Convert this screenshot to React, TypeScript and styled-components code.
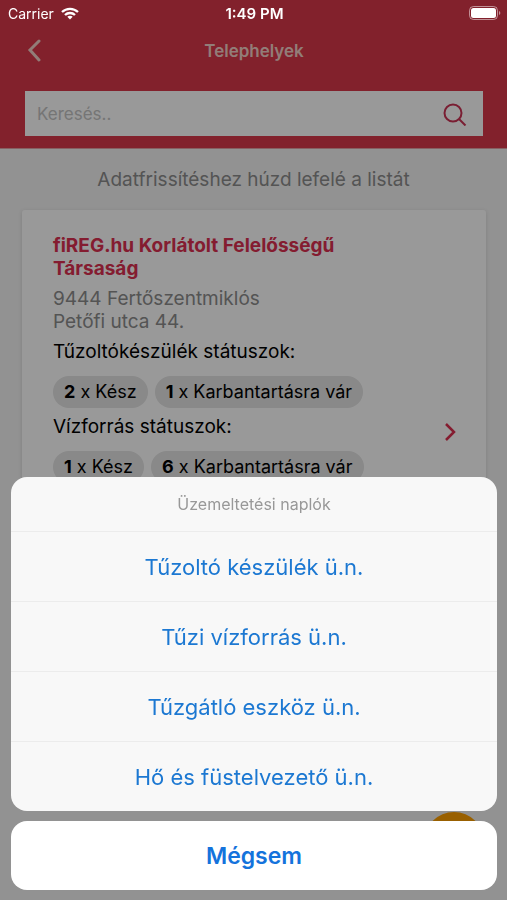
import React from 'react';
import styled, { createGlobalStyle } from 'styled-components';

const GlobalStyle = createGlobalStyle`
  *, *::before, *::after { box-sizing: border-box; }
  body {
    margin: 0;
    background: #f3f3f3;
    color: #000;
    font-family: Inter, "Liberation Sans", sans-serif;
    font-size: 19px;
  }
  h1, h2, h3, p, ul, address { margin: 0; padding: 0; font-style: normal; }
  button, input { font: inherit; border: 0; padding: 0; background: none; }
  button { cursor: pointer; }
`;

const Page = styled.div`
  height: 100vh;
  overflow: hidden;
`;

const StatusBar = styled.div`
  position: fixed;
  inset: 0 0 auto;
  z-index: 3;
  display: grid;
  grid-template-columns: 1fr auto 1fr;
  align-items: center;
  height: 26px;
  padding: 0 6px 0 8px;
  color: #fff;
  font-size: 14px;
`;

const Carrier = styled.span`
  display: flex;
  align-items: center;
  gap: 7px;
`;

const Clock = styled.span`
  font-size: 15px;
  font-weight: 600;
`;

const Battery = styled.svg`
  justify-self: end;
`;

const Header = styled.header`
  padding: 26px 24px 12px 25px;
  background: #d9374a;
  border-bottom: 1px solid #e2a0a4;
`;

const NavBar = styled.nav`
  display: grid;
  grid-template-columns: 24px 1fr 24px;
  align-items: center;
  height: 50px;
  margin-bottom: 15px;
  color: #f3d0c8;
`;

const BackButton = styled.button`
  display: flex;
  color: inherit;
`;

const NavTitle = styled.h1`
  font-size: 17px;
  font-weight: 600;
  line-height: 24px;
  text-align: center;
`;

const SearchBox = styled.form`
  display: flex;
  align-items: center;
  height: 45px;
  padding: 0 16px 0 12px;
  background: #fff;
`;

const SearchInput = styled.input`
  flex: 1;
  min-width: 0;
  outline: none;
  font-size: 17px;
  &::placeholder { color: #c4c4c4; opacity: 1; }
`;

const SearchButton = styled.button`
  display: flex;
  color: #cc3355;
`;

const Hint = styled.p`
  padding: 18px 0;
  color: #8c8c8c;
  line-height: 25px;
  text-align: center;
`;

const Card = styled.article`
  display: flex;
  align-items: center;
  min-height: 444px;
  margin: 0 21px 0 22px;
  padding: 24px 28px 24px 31px;
  border-radius: 3px;
  background: #fff;
  box-shadow: 0 1px 4px rgba(0, 0, 0, 0.12);
`;

const CardBody = styled.div`
  flex: 1;
  align-self: flex-start;
  min-width: 0;
`;

const Company = styled.h2`
  max-width: 320px;
  margin-bottom: 7px;
  color: #dc3050;
  font-size: 19px;
  font-weight: 700;
  line-height: 23px;
`;

const Address = styled.address`
  color: #8c8c8c;
  line-height: 23px;
`;

const StatusLabel = styled.h3`
  padding: 6px 0 12px;
  font-size: 19px;
  font-weight: 400;
  line-height: 25px;
`;

const Chips = styled.ul`
  display: flex;
  gap: 7px;
  list-style: none;
`;

const Chip = styled.li`
  padding: 0 11px;
  border-radius: 16px;
  background: #e4e4e4;
  font-size: 18px;
  line-height: 32px;
  white-space: nowrap;
`;

const CardLink = styled.a`
  display: flex;
  color: #dc3050;
`;

const AddButton = styled.button`
  position: fixed;
  right: 23px;
  bottom: 28px;
  width: 60px;
  height: 60px;
  border-radius: 50%;
  background: #ffa000;
`;

const Backdrop = styled.div`
  position: fixed;
  inset: 0;
  z-index: 2;
  display: flex;
  flex-direction: column;
  justify-content: flex-end;
  gap: 10px;
  padding: 10px 10px 10px 11px;
  background: rgba(0, 0, 0, 0.4);
`;

const Sheet = styled.section`
  overflow: hidden;
  border-radius: 16px;
  background: #f8f8f8;
`;

const SheetTitle = styled.h2`
  color: #989898;
  font-size: 16px;
  font-weight: 400;
  line-height: 54px;
  text-align: center;
`;

const SheetAction = styled.button`
  display: block;
  width: 100%;
  height: 70px;
  border-top: 1px solid #ececec;
  color: #1c78d2;
  font-size: 22px;
`;

const CancelButton = styled.button`
  flex: none;
  height: 69px;
  border-radius: 16px;
  background: #fff;
  color: #1473dc;
  font-size: 23px;
  font-weight: 600;
`;

const statuses = [
  { label: 'Tűzoltókészülék státuszok:', items: [[2, 'Kész'], [1, 'Karbantartásra vár']] },
  { label: 'Vízforrás státuszok:', items: [[1, 'Kész'], [6, 'Karbantartásra vár']] },
];

const actions = [
  'Tűzoltó készülék ü.n.',
  'Tűzi vízforrás ü.n.',
  'Tűzgátló eszköz ü.n.',
  'Hő és füstelvezető ü.n.',
];

export default function App() {
  return (
    <Page>
      <GlobalStyle />
      <StatusBar>
        <Carrier>
          Carrier
          <svg width="18" height="13" viewBox="0 0 18 13" fill="none" stroke="#fff" strokeWidth="2.3" aria-hidden="true">
            <path d="M1 5C5.5 .7 12.5 .7 17 5" />
            <path d="M4 8C6.8 5.3 11.2 5.3 14 8" />
            <path d="M9 12.5 6.3 9.8C7.8 8.4 10.2 8.4 11.7 9.8Z" fill="#fff" stroke="none" />
          </svg>
        </Carrier>
        <Clock>1:49 PM</Clock>
        <Battery width="32" height="14" viewBox="0 0 32 14" aria-hidden="true">
          <rect x=".5" y=".5" width="28" height="13" rx="4" fill="none" stroke="#fff" strokeOpacity=".5" />
          <rect x="2" y="2" width="25" height="10" rx="2.5" fill="#fff" />
          <path d="M30 5c1.8.6 1.8 3.4 0 4Z" fill="#fff" fillOpacity=".5" />
        </Battery>
      </StatusBar>

      <Header>
        <NavBar>
          <BackButton aria-label="Vissza">
            <svg width="20" height="24" viewBox="0 0 20 24" fill="none" stroke="currentColor" strokeWidth="3" strokeLinecap="round">
              <path d="M14 2 5 11l9 10" />
            </svg>
          </BackButton>
          <NavTitle>Telephelyek</NavTitle>
        </NavBar>
        <SearchBox role="search">
          <SearchInput type="text" placeholder="Keresés.." aria-label="Keresés" />
          <SearchButton type="button" aria-label="Keresés">
            <svg width="24" height="24" viewBox="0 0 24 24" fill="none" stroke="currentColor" strokeWidth="2">
              <circle cx="10" cy="11" r="8.5" />
              <path d="m16 17 6.5 6.5" />
            </svg>
          </SearchButton>
        </SearchBox>
      </Header>

      <main>
        <Hint>Adatfrissítéshez húzd lefelé a listát</Hint>
        <Card>
          <CardBody>
            <Company>fiREG.hu Korlátolt Felelősségű Társaság</Company>
            <Address>9444 Fertőszentmiklós<br />Petőfi utca 44.</Address>
            {statuses.map((group) => (
              <section key={group.label}>
                <StatusLabel>{group.label}</StatusLabel>
                <Chips>
                  {group.items.map(([count, name]) => (
                    <Chip key={name}><b>{count}</b> x {name}</Chip>
                  ))}
                </Chips>
              </section>
            ))}
          </CardBody>
          <CardLink href="#" aria-label="Megnyitás">
            <svg width="16" height="20" viewBox="0 0 16 20" fill="none" stroke="currentColor" strokeWidth="2.5">
              <path d="m4 2 8 8-8 8" />
            </svg>
          </CardLink>
        </Card>
      </main>
      <AddButton aria-label="Hozzáadás" />

      <Backdrop>
        <Sheet role="dialog" aria-labelledby="sheet-title">
          <SheetTitle id="sheet-title">Üzemeltetési naplók</SheetTitle>
          {actions.map((action) => (
            <SheetAction key={action}>{action}</SheetAction>
          ))}
        </Sheet>
        <CancelButton>Mégsem</CancelButton>
      </Backdrop>
    </Page>
  );
}
